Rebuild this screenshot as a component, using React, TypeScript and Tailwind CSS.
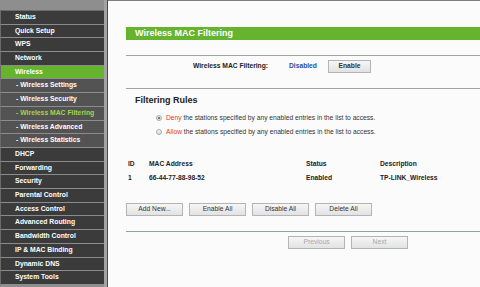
import React from "react";

type Item = { t: string; sub?: boolean; active?: boolean };

const items: Item[] = [
  { t: "Status" },
  { t: "Quick Setup" },
  { t: "WPS" },
  { t: "Network" },
  { t: "Wireless", active: true },
  { t: "Wireless Settings", sub: true },
  { t: "Wireless Security", sub: true },
  { t: "Wireless MAC Filtering", sub: true, active: true },
  { t: "Wireless Advanced", sub: true },
  { t: "Wireless Statistics", sub: true },
  { t: "DHCP" },
  { t: "Forwarding" },
  { t: "Security" },
  { t: "Parental Control" },
  { t: "Access Control" },
  { t: "Advanced Routing" },
  { t: "Bandwidth Control" },
  { t: "IP & MAC Binding" },
  { t: "Dynamic DNS" },
  { t: "System Tools" },
];

function NavItem({ it }: { it: Item }) {
  let cls = "bg-[#3b3b3b] text-white";
  if (it.sub) cls = it.active ? "bg-[#535353] text-[#a6d34a]" : "bg-[#535353] text-white";
  else if (it.active) cls = "bg-[#66b32e] text-white";
  return (
    <div
      className={`flex items-center border-b border-[#8c8c8c] border-l border-l-[#6a6a6a] font-bold text-[6.8px] leading-none ${cls} ${
        it.sub ? "pl-[15px]" : "pl-[14px]"
      }`}
    >
      {it.sub ? <span className="mr-[2px]">-</span> : null}
      {it.t}
    </div>
  );
}

function Btn({ children, w, disabled }: { children: React.ReactNode; w: string; disabled?: boolean }) {
  return (
    <div
      className={`flex h-[13px] items-center justify-center border border-[#b4b4b4] bg-gradient-to-b from-[#f6f6f6] to-[#e2e2e2] text-[6.7px] leading-none ${w} ${
        disabled ? "text-[#a8a8a8]" : "text-[#333]"
      }`}
    >
      {children}
    </div>
  );
}

function Radio({ checked }: { checked?: boolean }) {
  return (
    <div className="flex h-[6px] w-[6px] items-center justify-center rounded-full border border-[#a9a9a9] bg-gradient-to-b from-[#f4f4f4] to-[#dcdcdc]">
      {checked ? <div className="h-[2px] w-[2px] rounded-full bg-[#555]" /> : null}
    </div>
  );
}

export default function App() {
  return (
    <div
      className="flex h-[287px] w-[480px] overflow-hidden bg-[#fbfbfb] text-[#222]"
      style={{ fontFamily: '"Liberation Sans", Arial, sans-serif' }}
    >
      {/* Sidebar */}
      <div className="flex h-full w-[108px] shrink-0">
        <div className="flex w-[104px] flex-col bg-[#8e8e8e]">
          <div className="h-[11px] shrink-0 border-b border-[#6d6d6d]" />
          <div className="grid h-[274px] grid-rows-[repeat(20,1fr)]">
            {items.map((it) => (
              <NavItem key={it.t} it={it} />
            ))}
          </div>
        </div>
        <div className="w-[3px] bg-[#a3a3a3]" />
        <div className="w-[1px] bg-[#4a4a4a]" />
      </div>

      {/* Content */}
      <div className="flex min-w-0 flex-1 flex-col border-t border-[#7c7c7c] pl-[18px]">
        <div className="mt-[26px] flex h-[13px] items-center bg-[#66b32e] pl-[9px] text-[9px] font-bold leading-none text-white">
          Wireless MAC Filtering
        </div>
        <div className="mt-[15px] h-[1px] bg-[#9aa7a3]" />
        <div className="flex h-[32px] items-start pt-[4px] text-[6.7px] font-bold leading-none">
          <div className="flex h-[13px] w-[144px] items-center justify-end pr-[2px]">Wireless MAC Filtering:</div>
          <div className="ml-[19px] flex h-[13px] w-[39px] items-center text-[#1f4fa0]">Disabled</div>
          <Btn w="w-[43px]">Enable</Btn>
        </div>
        <div className="h-[1px] bg-[#9aa7a3]" />
        <div className="mt-[7px] pl-[9px] text-[9px] font-bold leading-none">Filtering Rules</div>
        <div className="mt-[10px] flex items-center pl-[30px] text-[6.7px] leading-none text-[#333]">
          <Radio checked />
          <span className="ml-[4px]">
            <span className="text-[#e03a2f]">Deny</span> the stations specified by any enabled entries in the list to access.
          </span>
        </div>
        <div className="mt-[7px] flex items-center pl-[30px] text-[6.7px] leading-none text-[#333]">
          <Radio />
          <span className="ml-[4px]">
            <span className="text-[#e03a2f]">Allow</span> the stations specified by any enabled entries in the list to access.
          </span>
        </div>
        <div className="mt-[26px] flex text-[6.7px] font-bold leading-none">
          <div className="w-[23px] pl-[2px]">ID</div>
          <div className="w-[157px]">MAC Address</div>
          <div className="w-[74px]">Status</div>
          <div>Description</div>
        </div>
        <div className="mt-[7px] flex text-[6.7px] font-bold leading-none">
          <div className="w-[23px] pl-[2px]">1</div>
          <div className="w-[157px]">66-44-77-88-98-52</div>
          <div className="w-[74px]">Enabled</div>
          <div>TP-LINK_Wireless</div>
        </div>
        <div className="mt-[21px] flex gap-[6px]">
          <Btn w="w-[57px]">Add New...</Btn>
          <Btn w="w-[57px]">Enable All</Btn>
          <Btn w="w-[57px]">Disable All</Btn>
          <Btn w="w-[57px]">Delete All</Btn>
        </div>
        <div className="mt-[15px] h-[1px] bg-[#8fa39d]" />
        <div className="mt-[4px] flex gap-[6px] pl-[162px]">
          <Btn w="w-[57px]" disabled>
            Previous
          </Btn>
          <Btn w="w-[57px]" disabled>
            Next
          </Btn>
        </div>
      </div>
    </div>
  );
}
